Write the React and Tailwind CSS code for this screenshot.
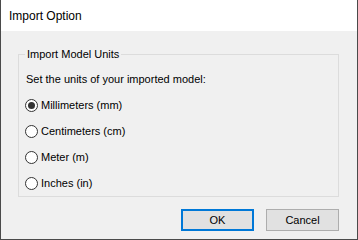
import React from 'react';

const units = [
  { label: 'Millimeters (mm)', checked: true },
  { label: 'Centimeters (cm)', checked: false },
  { label: 'Meter (m)', checked: false },
  { label: 'Inches (in)', checked: false },
];

const Radio = ({ checked }) => (
  <span className="w-[13px] h-[13px] rounded-full border border-[#333333] bg-white flex items-center justify-center shrink-0">
    {checked && <span className="w-[7px] h-[7px] rounded-full bg-[#333333]"></span>}
  </span>
);

export default function App() {
  return (
    <div className="w-[358px] h-[240px] flex flex-col bg-[#f0f0f0] border-x border-b border-[#4a4a4a] text-[11px] text-black font-['Liberation_Sans',sans-serif]">
      <div className="h-[31px] bg-white flex items-center pl-[8px] text-[12px]">Import Option</div>

      <div className="flex flex-col pt-[23px] pl-[17px] pr-[18px]">
        <div className="relative border border-[#dcdcdc] pt-[11px]">
          <span className="absolute -top-[8px] left-[6px] px-[2px] bg-[#f0f0f0] leading-[15px]">
            Import Model Units
          </span>
          <div className="h-[26px] flex items-center pl-[7px]">Set the units of your imported model:</div>
          {units.map((u, i) => (
            <div key={i} className="h-[26px] flex items-center pl-[6px] gap-[3px]">
              <Radio checked={u.checked} />
              <span>{u.label}</span>
            </div>
          ))}
        </div>

        <div className="flex justify-end gap-[12px] mt-[12px]">
          <button className="w-[73px] h-[22px] border-2 border-[#0078d7] bg-[#e1e1e1] flex items-center justify-center">
            OK
          </button>
          <button className="w-[73px] h-[22px] border border-[#adadad] bg-[#e1e1e1] flex items-center justify-center">
            Cancel
          </button>
        </div>
      </div>
    </div>
  );
}
